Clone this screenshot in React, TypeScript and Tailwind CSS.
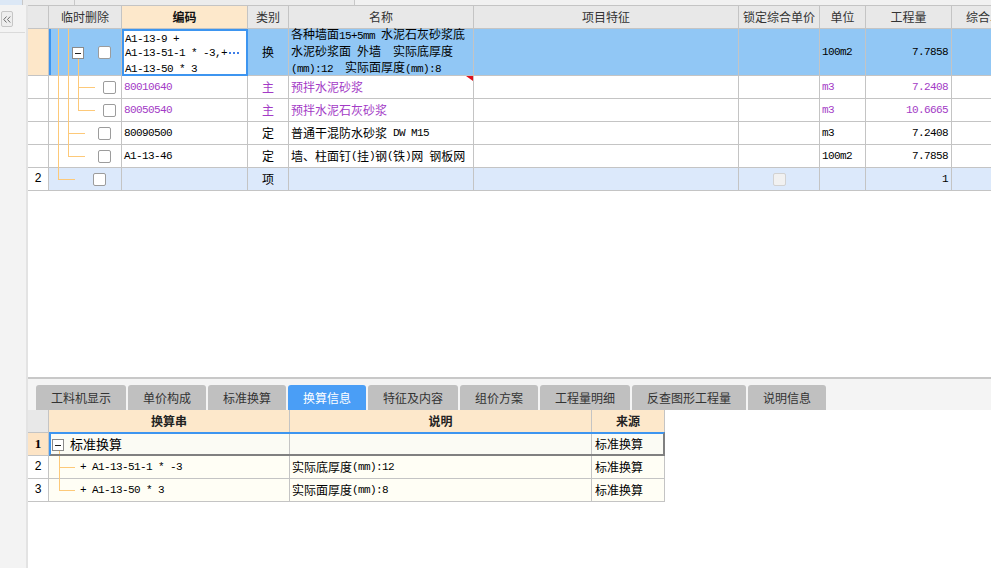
import type { ReactNode } from 'react';

const CJK = "font-['Noto_Sans_CJK_SC',sans-serif]";
const LINE = 'bg-[#fdc979]';

// ascii runs get a narrow mono face so they sit at half the CJK width
function Mix({ s }: { s: string }) {
  const parts = s.split(/([\x20-\x7e]+)/).filter(Boolean);
  return (
    <>
      {parts.map((p, i) =>
        /^[\x20-\x7e]+$/.test(p) ? (
          <span key={i} className="font-['Liberation_Mono',monospace] text-[11px] tracking-[-0.6px]">
            {p}
          </span>
        ) : (
          <span key={i}>{p}</span>
        ),
      )}
    </>
  );
}

function Cb({ className }: { className: string }) {
  return <div className={`absolute w-[13px] h-[13px] rounded-[2px] border border-[#9c9c9c] bg-white ${className}`} />;
}

function Minus({ className }: { className: string }) {
  return (
    <div className={`absolute w-[12px] h-[12px] border border-[#8a8a8a] bg-white flex items-center justify-center ${className}`}>
      <div className="w-[6px] h-px bg-[#222]" />
    </div>
  );
}

const B = 'shrink-0 border-r border-b border-[#c4c4c4] h-full';

function Row({
  h,
  bg,
  num,
  numBg,
  tree,
  code,
  codeCell,
  type,
  name,
  unit,
  qty,
  tone,
  lock,
  flag,
}: {
  h: string;
  bg: string;
  num?: string;
  numBg: string;
  tree: ReactNode;
  code?: ReactNode;
  codeCell?: string;
  type: string;
  name?: ReactNode;
  unit?: string;
  qty: string;
  tone: string;
  lock?: boolean;
  flag?: boolean;
}) {
  return (
    <div className={`flex ${h} ${bg} ${tone} text-[12px]`}>
      <div className={`${B} w-[21px] ${numBg} flex items-center justify-center font-['Liberation_Mono',monospace] text-[12px] text-black`}>
        {num}
      </div>
      <div className={`${B} w-[73px] relative`}>{tree}</div>
      <div className={codeCell ?? `${B} w-[126px] flex items-center pl-[2px] whitespace-pre`}>{code}</div>
      <div className={`${B} w-[41px] flex items-center justify-center ${CJK}`}>{type}</div>
      <div className={`${B} w-[185px] relative flex items-center pl-[2px] whitespace-pre ${CJK}`}>
        {name}
        {flag && (
          <div className="absolute right-0 top-0 w-0 h-0 border-t-[5px] border-l-[7px] border-t-[#e0101a] border-l-transparent" />
        )}
      </div>
      <div className={`${B} w-[265px]`} />
      <div className={`${B} w-[81px] relative`}>
        {lock && (
          <div className="absolute left-[34px] top-[5px] w-[13px] h-[13px] rounded-[2px] border border-[#d2d2d2] bg-[#f1f1f1]" />
        )}
      </div>
      <div className={`${B} w-[46px] flex items-center pl-[2px] font-['Liberation_Mono',monospace] text-[11px] tracking-[-0.6px]`}>
        {unit}
      </div>
      <div className={`${B} w-[86px] flex items-center justify-end pr-[3px] font-['Liberation_Mono',monospace] text-[11px] tracking-[-0.6px]`}>
        {qty}
      </div>
      <div className="flex-1 border-b border-[#c4c4c4] h-full" />
    </div>
  );
}

const TABS = [
  ['工料机显示', 'w-[90px]'],
  ['单价构成', 'w-[78px]'],
  ['标准换算', 'w-[78px]'],
  ['换算信息', 'w-[78px]'],
  ['特征及内容', 'w-[90px]'],
  ['组价方案', 'w-[78px]'],
  ['工程量明细', 'w-[90px]'],
  ['反查图形工程量', 'w-[114px]'],
  ['说明信息', 'w-[78px]'],
];

export default function App() {
  const purple = 'text-[#a33bc6]';
  return (
    <div className={`w-[991px] h-[568px] overflow-hidden flex flex-col bg-white ${CJK} text-black`}>
      {/* cut-off toolbar strip */}
      <div className="h-[5px] flex shrink-0">
        <div className="w-[23px] bg-[#dce8f6] border-r border-[#c8c8c8]" />
        <div className="w-[52px] bg-[#ececec] border-r border-[#c8c8c8]" />
        <div className="w-[280px] bg-[#ececec] border-r border-[#c8c8c8]" />
        <div className="flex-1 bg-[#f1f1f1]" />
      </div>

      <div className="flex flex-1 min-h-0">
        {/* collapsed side panel */}
        <div className="w-[26px] shrink-0 bg-[#f3f3f3] flex flex-col">
          <div className="mt-[6px] ml-[1px] w-[12px] h-[16px] rounded-[2px] border border-[#c6c6c6] bg-[#eeeeee] flex items-center justify-center">
            <svg width="8" height="7" viewBox="0 0 8 7" fill="none" stroke="#6b6b6b" strokeWidth="1">
              <path d="M3.5 0.5 L0.8 3.5 L3.5 6.5 M7.2 0.5 L4.5 3.5 L7.2 6.5" />
            </svg>
          </div>
          <div className="mt-[5px] h-px w-[25px] bg-[#dadada]" />
        </div>
        <div className="w-[2px] shrink-0 bg-[#e3e3e3]" />

        <div className="flex-1 min-w-0 flex flex-col">
          {/* upper grid */}
          <div className="border-t border-[#c4c4c4] flex flex-col shrink-0">
            <div className="flex h-[23px] bg-[#e8e8e8] text-[12px] text-[#333]">
              <div className={`${B} w-[21px]`} />
              <div className={`${B} w-[73px] flex items-center justify-center`}>临时删除</div>
              <div className={`${B} w-[126px] flex items-center justify-center bg-[#fde8cb] font-bold text-[#111]`}>编码</div>
              <div className={`${B} w-[41px] flex items-center justify-center`}>类别</div>
              <div className={`${B} w-[185px] flex items-center justify-center`}>名称</div>
              <div className={`${B} w-[265px] flex items-center justify-center`}>项目特征</div>
              <div className={`${B} w-[81px] flex items-center justify-center`}>锁定综合单价</div>
              <div className={`${B} w-[46px] flex items-center justify-center`}>单位</div>
              <div className={`${B} w-[86px] flex items-center justify-center`}>工程量</div>
              <div className="flex-1 border-b border-[#c4c4c4] h-full flex items-center pl-[14px] overflow-hidden whitespace-nowrap">综合单价</div>
            </div>

            <Row
              h="h-[47px]"
              bg="bg-[#91c7f5]"
              numBg="bg-[#fde7c9]"
              tone="text-black"
              tree={
                <>
                  <div className="absolute left-0 top-0 h-full w-[2px] bg-[#3d95f0]" />
                  <div className={`absolute left-[9px] top-0 bottom-[-1px] w-px ${LINE}`} />
                  <div className={`absolute left-[19px] top-0 bottom-[-1px] w-px ${LINE}`} />
                  <div className={`absolute left-[29px] top-[30px] bottom-[-1px] w-px ${LINE}`} />
                  <Minus className="left-[23px] top-[18px]" />
                  <Cb className="left-[49px] top-[17px]" />
                </>
              }
              codeCell="shrink-0 w-[126px] h-full border-2 border-[#3d95f0] bg-white flex flex-col justify-center pl-[1px] leading-[14px] whitespace-pre"
              code={
                <>
                  <div><Mix s="A1-13-9 +" /></div>
                  <div className="flex items-center">
                    <Mix s="A1-13-51-1 * -3,+" />
                    <span className="ml-[2px] flex gap-[2px]">
                      <span className="w-[2px] h-[2px] bg-[#3f7fe8]" />
                      <span className="w-[2px] h-[2px] bg-[#3f7fe8]" />
                      <span className="w-[2px] h-[2px] bg-[#3f7fe8]" />
                    </span>
                  </div>
                  <div><Mix s="A1-13-50 * 3" /></div>
                </>
              }
              type="换"
              name={
                <div className="flex flex-col leading-[13.5px]">
                  <div><Mix s="各种墙面15+5mm 水泥石灰砂浆底" /></div>
                  <div><Mix s="水泥砂浆面 外墙  实际底厚度" /></div>
                  <div><Mix s="(mm):12  实际面厚度(mm):8" /></div>
                </div>
              }
              unit="100m2"
              qty="7.7858"
            />

            <Row
              h="h-[23px]"
              bg="bg-white"
              numBg="bg-white"
              tone={purple}
              tree={
                <>
                  <div className={`absolute left-[9px] top-0 bottom-[-1px] w-px ${LINE}`} />
                  <div className={`absolute left-[19px] top-0 bottom-[-1px] w-px ${LINE}`} />
                  <div className={`absolute left-[29px] top-0 bottom-[-1px] w-px ${LINE}`} />
                  <div className={`absolute left-[29px] top-[11px] w-[17px] h-px ${LINE}`} />
                  <Cb className="left-[54px] top-[5px]" />
                </>
              }
              code={<Mix s="80010640" />}
              type="主"
              name="预拌水泥砂浆"
              flag
              unit="m3"
              qty="7.2408"
            />

            <Row
              h="h-[23px]"
              bg="bg-white"
              numBg="bg-white"
              tone={purple}
              tree={
                <>
                  <div className={`absolute left-[9px] top-0 bottom-[-1px] w-px ${LINE}`} />
                  <div className={`absolute left-[19px] top-0 bottom-[-1px] w-px ${LINE}`} />
                  <div className={`absolute left-[29px] top-0 h-[12px] w-px ${LINE}`} />
                  <div className={`absolute left-[29px] top-[11px] w-[17px] h-px ${LINE}`} />
                  <Cb className="left-[54px] top-[5px]" />
                </>
              }
              code={<Mix s="80050540" />}
              type="主"
              name="预拌水泥石灰砂浆"
              unit="m3"
              qty="10.6665"
            />

            <Row
              h="h-[23px]"
              bg="bg-white"
              numBg="bg-white"
              tone="text-black"
              tree={
                <>
                  <div className={`absolute left-[9px] top-0 bottom-[-1px] w-px ${LINE}`} />
                  <div className={`absolute left-[19px] top-0 bottom-[-1px] w-px ${LINE}`} />
                  <div className={`absolute left-[19px] top-[11px] w-[17px] h-px ${LINE}`} />
                  <Cb className="left-[49px] top-[5px]" />
                </>
              }
              code={<Mix s="80090500" />}
              type="定"
              name={<Mix s="普通干混防水砂浆 DW M15" />}
              unit="m3"
              qty="7.2408"
            />

            <Row
              h="h-[23px]"
              bg="bg-white"
              numBg="bg-white"
              tone="text-black"
              tree={
                <>
                  <div className={`absolute left-[9px] top-0 bottom-[-1px] w-px ${LINE}`} />
                  <div className={`absolute left-[19px] top-0 h-[12px] w-px ${LINE}`} />
                  <div className={`absolute left-[19px] top-[11px] w-[17px] h-px ${LINE}`} />
                  <Cb className="left-[49px] top-[5px]" />
                </>
              }
              code={<Mix s="A1-13-46" />}
              type="定"
              name={<Mix s="墙、柱面钉(挂)钢(铁)网 钢板网" />}
              unit="100m2"
              qty="7.7858"
            />

            <Row
              h="h-[23px]"
              bg="bg-[#dce9fb]"
              num="2"
              numBg="bg-white"
              tone="text-black"
              tree={
                <>
                  <div className={`absolute left-[9px] top-0 h-[12px] w-px ${LINE}`} />
                  <div className={`absolute left-[9px] top-[11px] w-[17px] h-px ${LINE}`} />
                  <Cb className="left-[44px] top-[5px]" />
                </>
              }
              type="项"
              lock
              qty="1"
            />
          </div>

          <div className="flex-1 min-h-0" />

          {/* lower pane */}
          <div className="h-[2px] bg-[#c8c8c8] shrink-0" />
          <div className="h-[31px] shrink-0 bg-[#f4f4f4] flex items-end gap-[2px] pl-[8px]">
            {TABS.map(([label, w]) => (
              <div
                key={label}
                className={`${w} h-[25px] rounded-t-[3px] flex items-center justify-center text-[12px] ${
                  label === '换算信息' ? 'bg-[#4a9ef6] text-white' : 'bg-[#c0c0c0] text-[#333]'
                }`}
              >
                {label}
              </div>
            ))}
          </div>

          <div className="h-[158px] shrink-0 flex flex-col text-[12px]">
            <div className="flex h-[23px] w-[637px]">
              <div className={`${B} w-[21px] bg-[#e8e8e8]`} />
              <div className={`${B} w-[241px] bg-[#fde8cb] flex items-center justify-center font-bold text-[#222]`}>换算串</div>
              <div className={`${B} w-[302px] bg-[#fde8cb] flex items-center justify-center font-bold text-[#222]`}>说明</div>
              <div className={`${B} w-[73px] bg-[#fde8cb] flex items-center justify-center font-bold text-[#222]`}>来源</div>
            </div>

            <div className="flex h-[23px] w-[637px] relative">
              <div className={`${B} w-[21px] bg-[#fde4c5] flex items-center justify-center font-['Liberation_Serif',serif] font-bold text-[13px]`}>1</div>
              <div className={`${B} w-[241px] bg-[#fbfbf4] relative flex items-center pl-[21px]`}>
                <Minus className="left-[3px] top-[6px]" />
                <div className={`absolute left-[10px] top-[18px] bottom-[-1px] w-px ${LINE}`} />
                <span className="text-[13px]">标准换算</span>
              </div>
              <div className={`${B} w-[302px] bg-[#fbfbf4]`} />
              <div className={`${B} w-[73px] bg-[#fbfbf4] flex items-center pl-[3px]`}>标准换算</div>
              <div className="absolute left-[21px] top-[-1px] w-[616px] h-[24px] border-2 border-[#3d95f0] border-r-[#808080] border-b-[#808080]" />
            </div>

            {[
              ['2', '+ A1-13-51-1 * -3', '实际底厚度(mm):12', true],
              ['3', '+ A1-13-50 * 3', '实际面厚度(mm):8', false],
            ].map(([n, expr, note, cont]) => (
              <div key={n as string} className="flex h-[23px] w-[637px]">
                <div className={`${B} w-[21px] bg-white flex items-center justify-center font-['Liberation_Mono',monospace]`}>{n}</div>
                <div className={`${B} w-[241px] bg-[#fffef5] relative flex items-center pl-[31px] whitespace-pre`}>
                  <div className={`absolute left-[10px] top-0 w-px ${cont ? 'bottom-[-1px]' : 'h-[12px]'} ${LINE}`} />
                  <div className={`absolute left-[10px] top-[11px] w-[16px] h-px ${LINE}`} />
                  <Mix s={expr as string} />
                </div>
                <div className={`${B} w-[302px] bg-[#fffef5] flex items-center pl-[2px] whitespace-pre`}>
                  <Mix s={note as string} />
                </div>
                <div className={`${B} w-[73px] bg-[#fffef5] flex items-center pl-[3px]`}>标准换算</div>
              </div>
            ))}
          </div>
        </div>
      </div>
    </div>
  );
}
